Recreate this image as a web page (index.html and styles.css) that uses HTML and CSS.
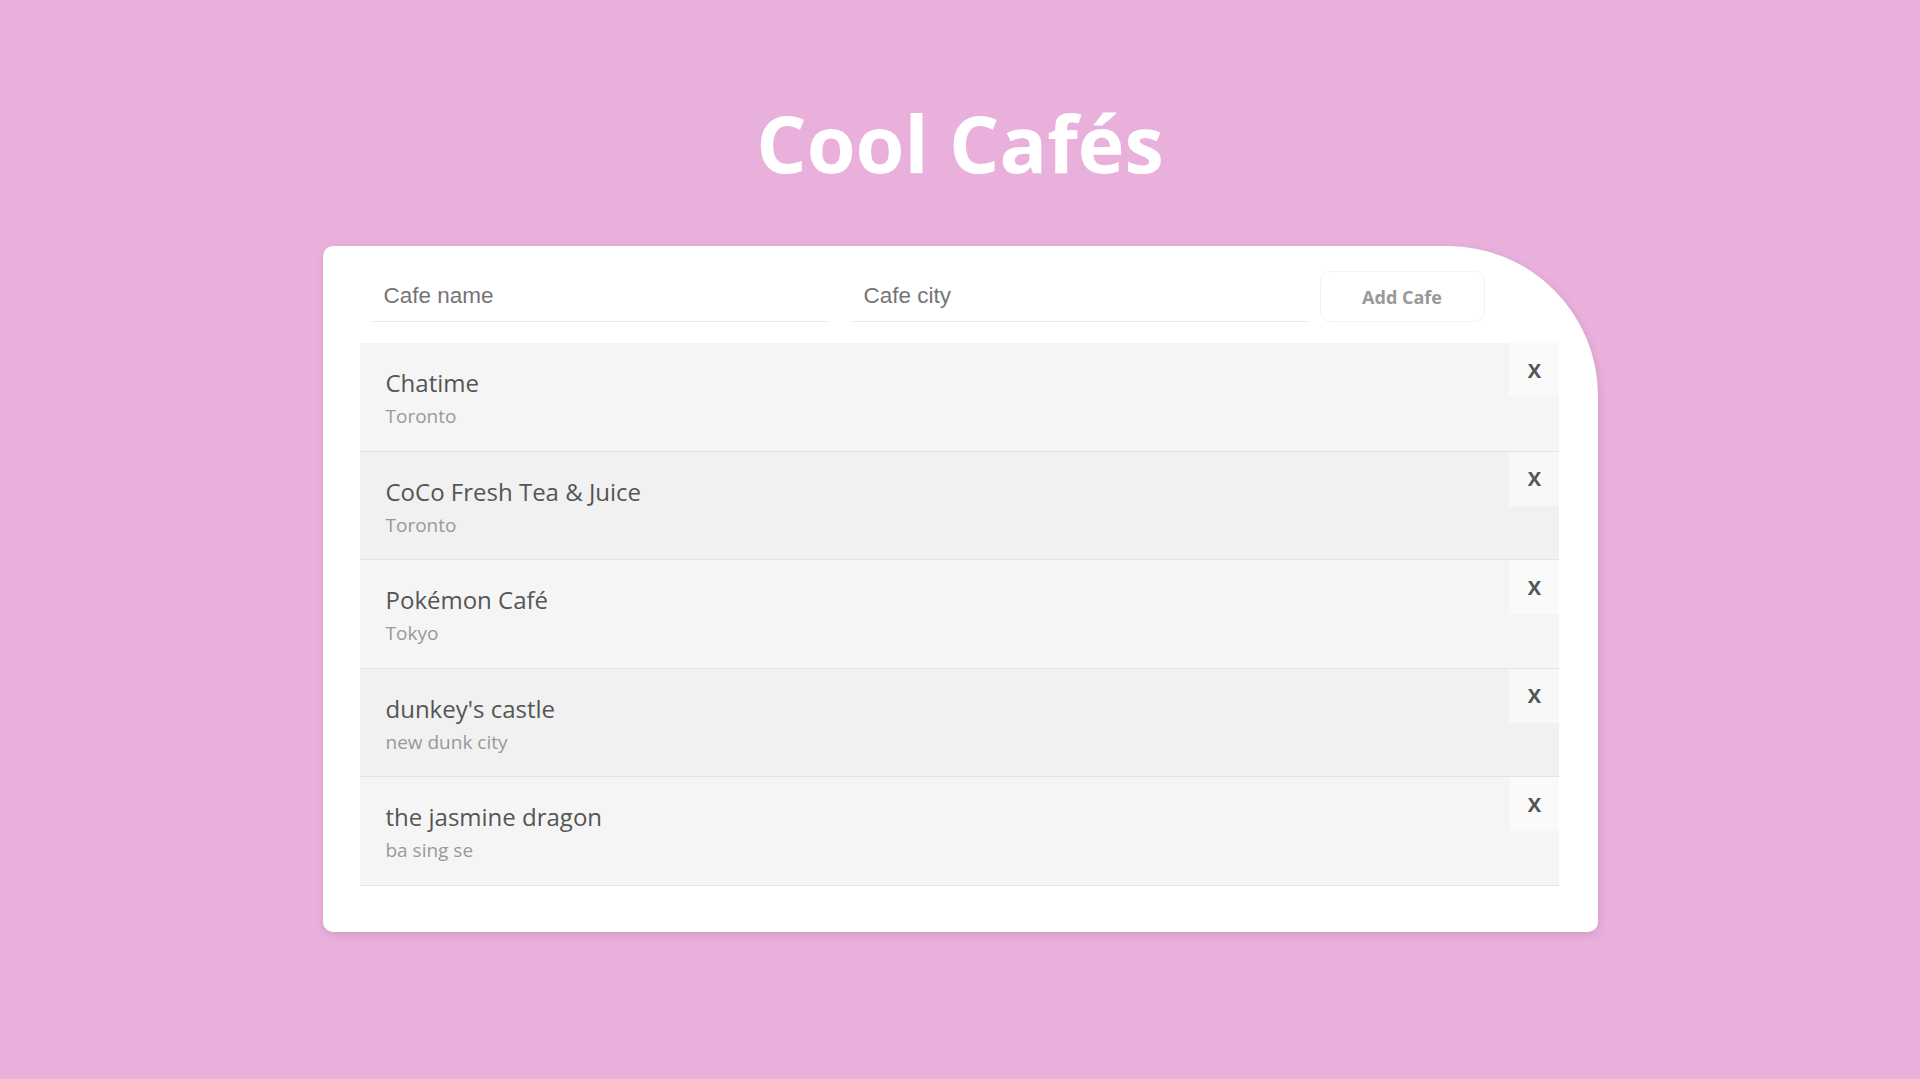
FILE: index.html
```html
<!DOCTYPE html>
<html lang="en">
<head>
<meta charset="utf-8">
<title>Cool Cafés</title>
<link rel="stylesheet" href="styles.css">
</head>
<body>
  <h1 class="title">Cool Cafés</h1>
  <main class="card">
    <form class="add-form">
      <input class="field" type="text" name="name" placeholder="Cafe name">
      <input class="field" type="text" name="city" placeholder="Cafe city">
      <button class="add-btn" type="button">Add Cafe</button>
    </form>
    <ul class="cafe-list">
      <li class="cafe">
        <span class="cafe-name">Chatime</span>
        <span class="cafe-city">Toronto</span>
        <div class="delete">x</div>
      </li>
      <li class="cafe">
        <span class="cafe-name">CoCo Fresh Tea &amp; Juice</span>
        <span class="cafe-city">Toronto</span>
        <div class="delete">x</div>
      </li>
      <li class="cafe">
        <span class="cafe-name">Pokémon Café</span>
        <span class="cafe-city">Tokyo</span>
        <div class="delete">x</div>
      </li>
      <li class="cafe">
        <span class="cafe-name">dunkey's castle</span>
        <span class="cafe-city">new dunk city</span>
        <div class="delete">x</div>
      </li>
      <li class="cafe">
        <span class="cafe-name">the jasmine dragon</span>
        <span class="cafe-city">ba sing se</span>
        <div class="delete">x</div>
      </li>
    </ul>
  </main>
</body>
</html>
```

FILE: styles.css
```css
* {
  box-sizing: border-box;
}

html, body {
  margin: 0;
  padding: 0;
}

body {
  background: #e8b0db;
  font-family: "Open Sans", "Noto Sans", sans-serif;
  padding-top: 93px;
  min-height: 1079px;
}

.title {
  margin: 0 0 53px;
  text-align: center;
  color: #ffffff;
  font-size: 79px;
  line-height: 100px;
  font-weight: 700;
}

.card {
  width: 1275px;
  margin: 0 auto;
  background: #ffffff;
  border-radius: 10px 150px 10px 10px;
  box-shadow: 1px 3px 8px rgba(0, 0, 0, 0.1);
  padding: 25px 39px 46px 37px;
}

.add-form {
  display: flex;
  align-items: stretch;
  margin: 0 0 21px 12px;
  height: 51px;
}

.field {
  width: 456px;
  margin-right: 24px;
  border: 0;
  border-bottom: 1px solid #ececec;
  background: transparent;
  font-family: "Liberation Sans", Arial, sans-serif;
  font-size: 22.5px;
  color: #555;
  padding: 0 12px 0;
  outline: none;
}

.field:nth-of-type(2) {
  margin-right: 12px;
}

.field::placeholder {
  color: #757575;
}

.add-btn {
  width: 165px;
  background: #ffffff;
  border: 1px solid #f3f3f3;
  border-radius: 10px;
  font-family: "Open Sans", "Noto Sans", sans-serif;
  font-size: 18px;
  font-weight: 700;
  color: #999999;
  padding: 0;
}

.cafe-list {
  list-style: none;
  margin: 0;
  padding: 0;
}

.cafe {
  position: relative;
  padding: 24px 80px 21.5px 26px;
  background: #f5f5f5;
  border-bottom: 1px solid #e4e4e4;
}

.cafe:nth-child(even) {
  background: #f1f1f1;
}

.cafe-name {
  display: block;
  font-size: 24px;
  line-height: 31px;
  color: #555555;
}

.cafe-city {
  display: block;
  margin-top: 5px;
  font-size: 19px;
  line-height: 26px;
  color: #999999;
}

.delete {
  position: absolute;
  top: 0;
  right: 0;
  width: 50px;
  height: 54px;
  display: flex;
  align-items: center;
  justify-content: center;
  background: #fafafa;
  color: #555555;
  font-weight: 700;
  font-size: 20px;
  text-transform: uppercase;
  padding-bottom: 0;
  padding-left: 2px;
}

.cafe:nth-child(even) .delete {
  background: #f8f8f8;
}
```
